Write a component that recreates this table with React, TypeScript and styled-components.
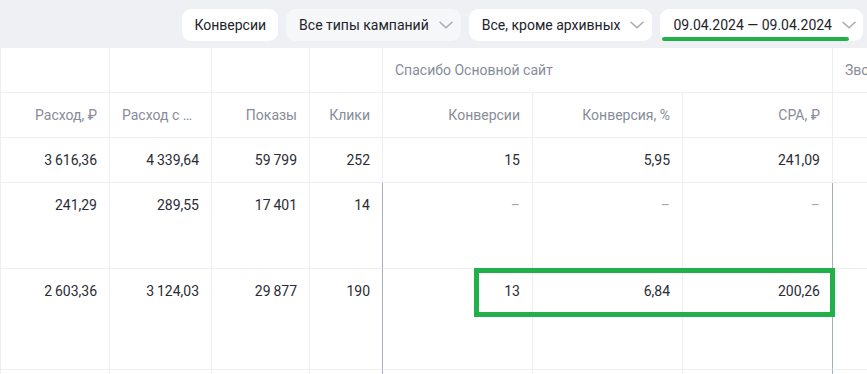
import styled, { createGlobalStyle } from 'styled-components'

const GlobalStyle = createGlobalStyle`
  html, body {
    margin: 0;
    padding: 0;
    background: #ffffff;
    overflow: hidden;
  }
  body {
    font-family: Roboto, "Open Sans", sans-serif;
    color: #21232b;
  }
`

const columns = [109, 102, 98, 73, 150, 150, 150, 150]

const subHeaders = ['Расход, ₽', 'Расход с …', 'Показы', 'Клики', 'Конверсии', 'Конверсия, %', 'CPA, ₽', '']

const rows = [
  { height: 45, values: ['3\u2009616,36', '4\u2009339,64', '59\u2009799', '252', '15', '5,95', '241,09', ''], total: true },
  { height: 86, values: ['241,29', '289,55', '17\u2009401', '14', '–', '–', '–', ''] },
  { height: 101, values: ['2\u2009603,36', '3\u2009124,03', '29\u2009877', '190', '13', '6,84', '200,26', ''] },
  { height: 60, values: ['', '', '', '', '', '', '', ''] },
]

function Chevron() {
  return (
    <ChevronIcon width="14" height="8" viewBox="0 0 14 8" fill="none">
      <path d="M1 1.2 L7 6.8 L13 1.2" stroke="#a4aab6" strokeWidth="1.5" strokeLinecap="round" strokeLinejoin="round" />
    </ChevronIcon>
  )
}

export default function App() {
  return (
    <Page>
      <GlobalStyle />
      <TopBar>
        <Chip $plain>Конверсии</Chip>
        <Chip $muted>
          Все типы кампаний
          <Chevron />
        </Chip>
        <Chip>
          Все, кроме архивных
          <Chevron />
        </Chip>
        <Chip $marked>
          09.04.2024 — 09.04.2024
          <Chevron />
        </Chip>
      </TopBar>
      <TableArea>
        <Grid $cols={columns} $rows={[45, 45, ...rows.map((r) => r.height)]}>
          <Cell />
          <Cell />
          <Cell />
          <Cell />
          <GroupCell $span={3}>Спасибо Основной сайт</GroupCell>
          <GroupCell>Звонки</GroupCell>

          {subHeaders.map((h, i) => (
            <HeadCell key={'h' + i} $left={i === 1}>
              {h}
            </HeadCell>
          ))}

          {rows.map((row, r) =>
            row.values.map((v, i) => (
              <Cell key={r + '-' + i} $accent={!row.total && (i === 4 || i === 7)} $dim={v === '–'}>
                {v}
              </Cell>
            ))
          )}
        </Grid>
        <Highlight />
      </TableArea>
    </Page>
  )
}

const Page = styled.div`
  width: 867px;
  height: 374px;
  overflow: hidden;
`

const TopBar = styled.div`
  height: 48px;
  background-color: #eef0f4;
  display: flex;
  align-items: center;
  justify-content: flex-end;
  gap: 8px;
  padding: 1px 4px 0 0;
  box-sizing: border-box;
`

const Chip = styled.div<{ $muted?: boolean; $marked?: boolean; $plain?: boolean }>`
  position: relative;
  height: 32px;
  display: flex;
  align-items: center;
  gap: 10px;
  padding: 0 ${(p) => (p.$plain ? 12 : p.$marked ? 7 : 8)}px 0 ${(p) => (p.$plain ? 12 : 13)}px;
  border-radius: 9px;
  background-color: ${(p) => (p.$muted ? '#f6f7f9' : '#ffffff')};
  font-size: 14px;
  color: #21232b;
  white-space: nowrap;

  ${(p) =>
    p.$marked &&
    `
    &::after {
      content: '';
      position: absolute;
      left: 2px;
      right: 14px;
      bottom: 0;
      height: 4px;
      border-radius: 2px;
      background-color: #22b04b;
    }
  `}
`

const ChevronIcon = styled.svg`
  flex: none;
`

const TableArea = styled.div`
  position: relative;
`

const Grid = styled.div<{ $cols: number[]; $rows: number[] }>`
  display: grid;
  grid-template-columns: ${(p) => p.$cols.map((c) => c + 'px').join(' ')};
  grid-template-rows: ${(p) => p.$rows.map((r) => r + 'px').join(' ')};
`

const Cell = styled.div<{ $accent?: boolean; $dim?: boolean }>`
  box-sizing: border-box;
  border-left: 1px solid ${(p) => (p.$accent ? '#a7aebb' : '#eceef2')};
  border-bottom: 1px solid #eceef2;
  padding: 0 12px;
  line-height: 44px;
  font-size: 14px;
  text-align: right;
  white-space: nowrap;
  overflow: hidden;
  text-overflow: ellipsis;
  color: ${(p) => (p.$dim ? '#a3a9b6' : '#2a2c35')};
`

const HeadCell = styled(Cell)<{ $left?: boolean }>`
  color: #868c99;
  text-align: ${(p) => (p.$left ? 'left' : 'right')};
`

const GroupCell = styled(Cell)<{ $span?: number }>`
  grid-column: span ${(p) => p.$span ?? 1};
  color: #868c99;
  text-align: left;
  text-overflow: clip;
`

const Highlight = styled.div`
  position: absolute;
  left: 474px;
  top: 220px;
  width: 361px;
  height: 49px;
  border: 5px solid #22b04b;
  box-sizing: border-box;
  pointer-events: none;
`
